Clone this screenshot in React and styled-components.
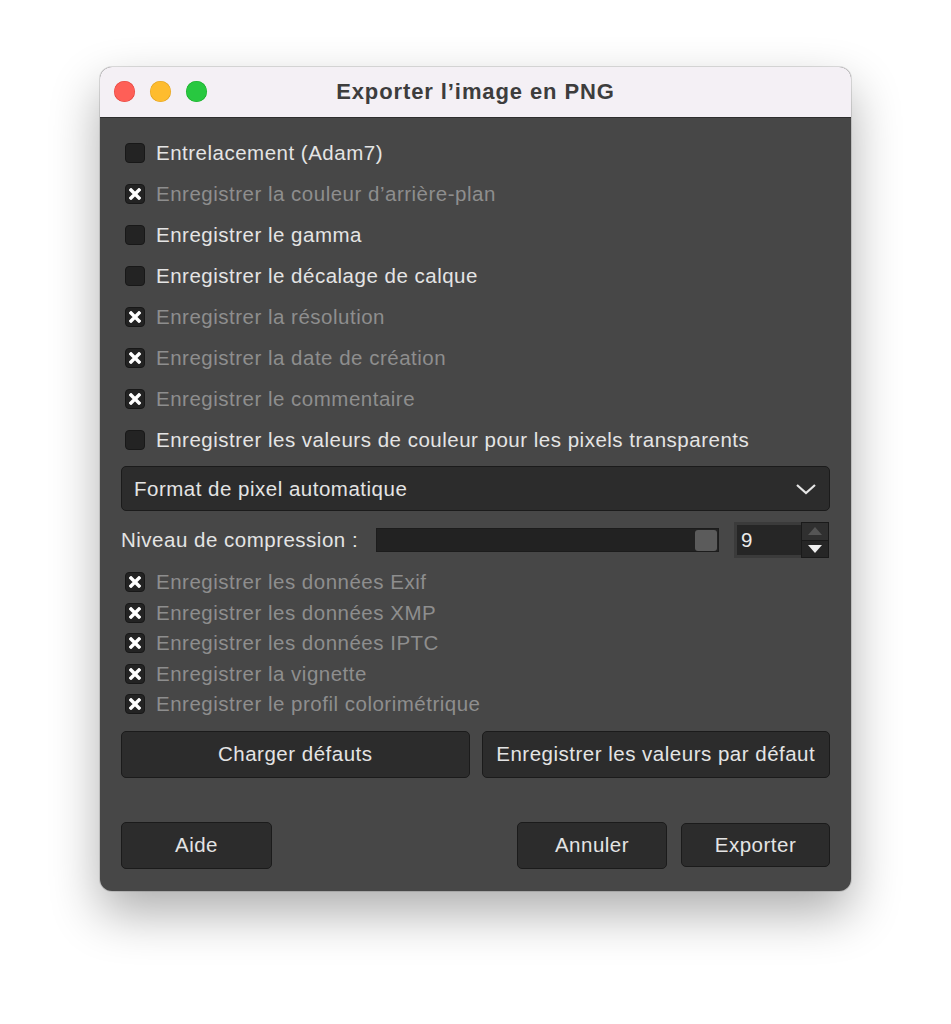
import React, { useState } from 'react';
import styled, { createGlobalStyle } from 'styled-components';

const GlobalStyle = createGlobalStyle`
  html, body {
    margin: 0;
    padding: 0;
    background: #ffffff;
    font-family: "Liberation Sans", Arial, sans-serif;
  }
`;

const topOptions = [
  { label: 'Entrelacement (Adam7)', checked: false },
  { label: 'Enregistrer la couleur d’arrière-plan', checked: true },
  { label: 'Enregistrer le gamma', checked: false },
  { label: 'Enregistrer le décalage de calque', checked: false },
  { label: 'Enregistrer la résolution', checked: true },
  { label: 'Enregistrer la date de création', checked: true },
  { label: 'Enregistrer le commentaire', checked: true },
  { label: 'Enregistrer les valeurs de couleur pour les pixels transparents', checked: false },
];

const metaOptions = [
  'Enregistrer les données Exif',
  'Enregistrer les données XMP',
  'Enregistrer les données IPTC',
  'Enregistrer la vignette',
  'Enregistrer le profil colorimétrique',
];

export default function App () {
  const [level] = useState(9);

  return (
    <Page>
      <GlobalStyle/>
      <Window>
        <TitleBar>
          <Lights>
            <Light color="#fe5f57" edge="#e0443e"/>
            <Light color="#febc2e" edge="#dea123"/>
            <Light color="#28c840" edge="#1aab29"/>
          </Lights>
          <Title>Exporter l’image en PNG</Title>
        </TitleBar>
        <Body>
          <OptionList>
            {topOptions.map((o, i) => (
              <OptionRow key={i} height={41}>
                <CheckBox checked={o.checked}/>
                <OptionLabel dim={o.checked}>{o.label}</OptionLabel>
              </OptionRow>
            ))}
          </OptionList>

          <Dropdown>
            <span>Format de pixel automatique</span>
            <svg width="22" height="14" viewBox="0 0 22 14">
              <polyline points="2,3 11,11 20,3" fill="none" stroke="#e6e6e6" strokeWidth="2.2"/>
            </svg>
          </Dropdown>

          <CompressionRow>
            <RowLabel>Niveau de compression :</RowLabel>
            <Trough>
              <Thumb/>
            </Trough>
            <SpinBox>
              <SpinEntry>{level}</SpinEntry>
              <SpinButtons>
                <SpinButton disabled>
                  <svg width="14" height="8" viewBox="0 0 14 8"><polygon points="7,0 14,8 0,8" fill="#555555"/></svg>
                </SpinButton>
                <SpinButton>
                  <svg width="14" height="8" viewBox="0 0 14 8"><polygon points="0,0 14,0 7,8" fill="#f0f0f0"/></svg>
                </SpinButton>
              </SpinButtons>
            </SpinBox>
          </CompressionRow>

          <MetaList>
            {metaOptions.map((label, i) => (
              <OptionRow key={i} height={30.5}>
                <CheckBox checked/>
                <OptionLabel dim>{label}</OptionLabel>
              </OptionRow>
            ))}
          </MetaList>

          <DefaultsRow>
            <Button>Charger défauts</Button>
            <Button>Enregistrer les valeurs par défaut</Button>
          </DefaultsRow>

          <ActionRow>
            <Button width={151}>Aide</Button>
            <Spacer/>
            <Button width={150}>Annuler</Button>
            <Button width={149} inset>Exporter</Button>
          </ActionRow>
        </Body>
      </Window>
    </Page>
  );
}

function CheckBox ({ checked }) {
  return (
    <Box>
      {checked && (
        <svg width="12" height="12" viewBox="0 0 12 12">
          <path d="M2 2 L10 10 M10 2 L2 10" stroke="#ffffff" strokeWidth="3.4" strokeLinecap="square"/>
        </svg>
      )}
    </Box>
  );
}

const Page = styled.div`
  padding: 67px 0 0 100px;
  height: 1024px;
  box-sizing: border-box;
`;

const Window = styled.div`
  width: 751px;
  height: 824px;
  border-radius: 12px;
  overflow: hidden;
  background: #474747;
  box-shadow: 0 0 0 1px rgba(0, 0, 0, 0.12), 0 22px 50px rgba(0, 0, 0, 0.32);
  display: flex;
  flex-direction: column;
`;

const TitleBar = styled.div`
  height: 50px;
  background: #f4f0f5;
  border-bottom: 1px solid #2e2e2e;
  display: flex;
  align-items: center;
  position: relative;
  flex-shrink: 0;
`;

const Lights = styled.div`
  display: flex;
  gap: 15px;
  padding-left: 14px;
  margin-top: -1px;
`;

const Light = styled.div`
  width: 21px;
  height: 21px;
  border-radius: 50%;
  background: ${props => props.color};
  box-shadow: inset 0 0 0 0.5px ${props => props.edge};
`;

const Title = styled.div`
  position: absolute;
  left: 0;
  right: 0;
  text-align: center;
  font-weight: bold;
  font-size: 22px;
  letter-spacing: 0.9px;
  color: #3d3d3d;
  pointer-events: none;
`;

const Body = styled.div`
  flex: 1;
  padding: 14px 21px 21px;
  display: flex;
  flex-direction: column;
  font-size: 20.5px;
  letter-spacing: 0.5px;
`;

const OptionList = styled.div`
  display: flex;
  flex-direction: column;
`;

const OptionRow = styled.div`
  height: ${props => props.height}px;
  display: flex;
  align-items: center;
  gap: 11px;
  padding-left: 4px;
`;

const Box = styled.div`
  width: 20px;
  height: 20px;
  box-sizing: border-box;
  border-radius: 4px;
  background: #232323;
  border: 1px solid #181818;
  display: flex;
  align-items: center;
  justify-content: center;
  flex-shrink: 0;
`;

const OptionLabel = styled.span`
  color: ${props => props.dim ? '#8e8e8e' : '#e4e4e4'};
  white-space: nowrap;
`;

const Dropdown = styled.div`
  margin-top: 6px;
  height: 45px;
  box-sizing: border-box;
  background: #2c2c2c;
  border: 1px solid #1b1b1b;
  border-radius: 5px;
  display: flex;
  align-items: center;
  justify-content: space-between;
  padding: 0 12px 0 12px;
  color: #e4e4e4;
`;

const CompressionRow = styled.div`
  margin-top: 11px;
  height: 36px;
  display: flex;
  align-items: center;
`;

const RowLabel = styled.span`
  color: #e4e4e4;
  width: 255px;
  white-space: nowrap;
`;

const Trough = styled.div`
  width: 343px;
  height: 24px;
  box-sizing: border-box;
  background: #222222;
  border: 1px solid #1c1c1c;
  display: flex;
  align-items: center;
  justify-content: flex-end;
  padding-right: 1px;
`;

const Thumb = styled.div`
  width: 22px;
  height: 21px;
  border-radius: 3px;
  background: #5b5b5b;
`;

const SpinBox = styled.div`
  margin-left: 15px;
  width: 95px;
  height: 36px;
  box-sizing: border-box;
  background: #3b3b3b;
  padding: 3px 0 3px 3px;
  display: flex;
`;

const SpinEntry = styled.div`
  flex: 1;
  background: #262626;
  color: #ececec;
  font-size: 20.5px;
  display: flex;
  align-items: center;
  padding-left: 4px;
`;

const SpinButtons = styled.div`
  width: 28px;
  margin: -3px 0 -3px 0;
  display: flex;
  flex-direction: column;
  background: #1a1a1a;
  padding: 1px;
  gap: 1px;
  box-sizing: border-box;
`;

const SpinButton = styled.div`
  flex: 1;
  background: ${props => props.disabled ? '#303030' : '#262626'};
  display: flex;
  align-items: center;
  justify-content: center;
`;

const MetaList = styled.div`
  margin-top: 9px;
  display: flex;
  flex-direction: column;
`;

const DefaultsRow = styled.div`
  margin-top: 11px;
  display: grid;
  grid-template-columns: 1fr 1fr;
  gap: 12px;
`;

const Button = styled.div`
  height: ${props => props.inset ? 44 : 47}px;
  margin: ${props => props.inset ? '1px 0 0 1px' : '0'};
  ${props => props.width ? `width: ${props.width}px;` : ''}
  box-sizing: border-box;
  background: #2c2c2c;
  border: 1px solid #1b1b1b;
  border-radius: 5px;
  display: flex;
  align-items: center;
  justify-content: center;
  color: #e4e4e4;
  white-space: nowrap;
`;

const ActionRow = styled.div`
  margin-top: 44px;
  display: flex;
  align-items: flex-start;
  gap: 13px;
`;

const Spacer = styled.div`
  flex: 1;
`;
